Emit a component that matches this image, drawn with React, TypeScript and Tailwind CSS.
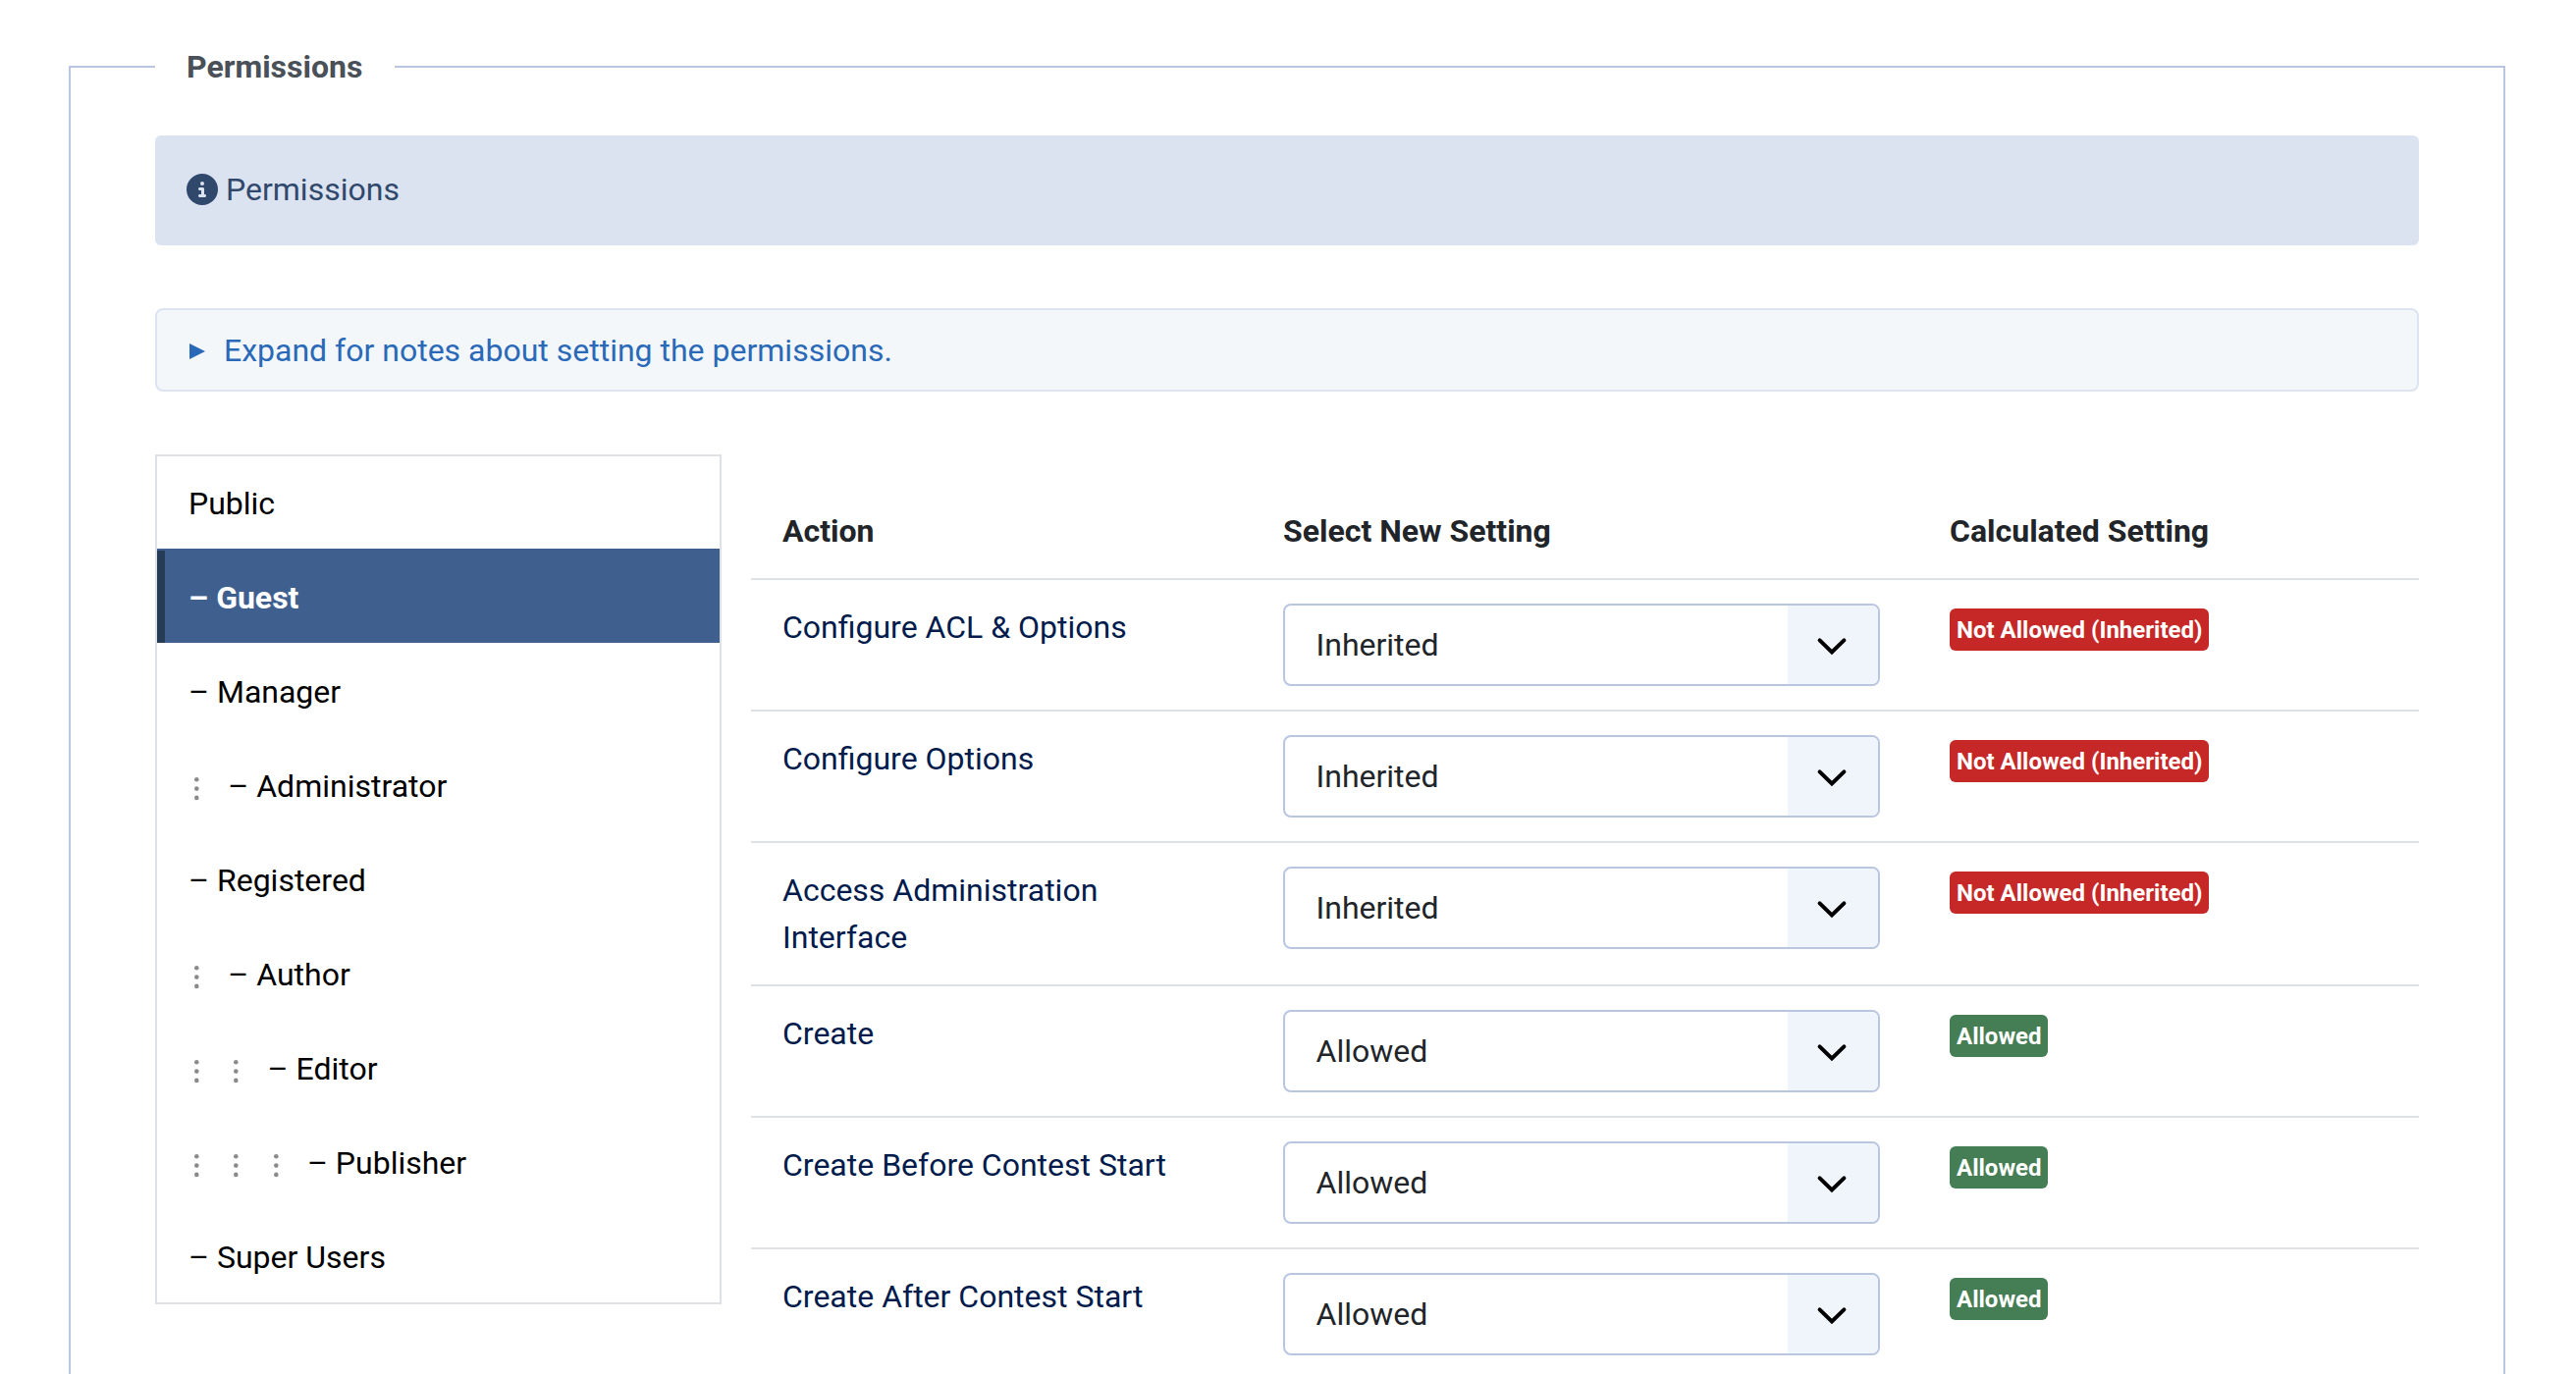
import { FaCircleInfo } from "react-icons/fa6";

type Group = { name: string; level: number };

const groups: Group[] = [
    { name: "Public", level: 0 },
    { name: "Guest", level: 1 },
    { name: "Manager", level: 1 },
    { name: "Administrator", level: 2 },
    { name: "Registered", level: 1 },
    { name: "Author", level: 2 },
    { name: "Editor", level: 3 },
    { name: "Publisher", level: 4 },
    { name: "Super Users", level: 1 },
];

const actions = [
    { label: "Configure ACL & Options", setting: "Inherited", allowed: false },
    { label: "Configure Options", setting: "Inherited", allowed: false },
    {
        label: "Access Administration Interface",
        setting: "Inherited",
        allowed: false,
    },
    { label: "Create", setting: "Allowed", allowed: true },
    { label: "Create Before Contest Start", setting: "Allowed", allowed: true },
    { label: "Create After Contest Start", setting: "Allowed", allowed: true },
];

function GroupTab({ group, active }: { group: Group; active: boolean }) {
    return (
        <button
            type="button"
            className={
                active
                    ? "flex h-24 shrink-0 items-center bg-[#3f608e] pt-1 pl-8 text-left font-bold text-white shadow-[inset_0_2px_0_#3f608e,inset_8px_0_0_#253b56]"
                    : "flex h-24 shrink-0 items-center pt-1 pl-8 text-left text-black"
            }
        >
            {Array.from({ length: Math.max(group.level - 1, 0) }).map(
                (_, i) => (
                    <svg
                        key={i}
                        className="mt-[6px] w-[40.3px] fill-[#8a8a8a]"
                        height="26"
                        viewBox="0 0 40.3 26"
                    >
                        <circle cx="8.3" cy="3.3" r="2.3" />
                        <circle cx="8.3" cy="12.6" r="2.3" />
                        <circle cx="8.3" cy="21.9" r="2.3" />
                    </svg>
                )
            )}
            {group.level > 0 ? `– ${group.name}` : group.name}
        </button>
    );
}

function SettingSelect({ value }: { value: string }) {
    return (
        <div className="flex h-[84px] w-[608px] overflow-hidden rounded-lg border-2 border-[#b8c6e1] bg-white text-[#212529]">
            <span className="flex flex-1 items-center pl-[31.5px]">
                {value}
            </span>
            <span className="flex w-[92px] items-center justify-center bg-[#f0f4fb]">
                <svg
                    className="mt-1 mr-[3px]"
                    width="32"
                    height="20"
                    viewBox="0 0 32 20"
                    fill="none"
                    stroke="#000"
                    strokeWidth="4"
                    strokeLinecap="round"
                    strokeLinejoin="miter"
                >
                    <path d="M3.6 3.4L16 15.4L28.4 3.4" />
                </svg>
            </span>
        </div>
    );
}

function Badge({ allowed }: { allowed: boolean }) {
    return (
        <span
            className={
                allowed
                    ? "mt-[5px] flex h-[43px] w-fit items-center rounded-md bg-[#457d54] px-[7px] text-2xl font-bold text-white"
                    : "mt-[5px] flex h-[43px] w-fit items-center rounded-md bg-[#c52827] px-[7px] text-2xl font-bold text-white"
            }
        >
            {allowed ? "Allowed" : "Not Allowed (Inherited)"}
        </span>
    );
}

export default function App() {
    return (
        <div className="h-[1400px] overflow-hidden bg-white px-[70px] pt-11 font-['Roboto',sans-serif] text-[32px] leading-[48px] text-[#212529]">
            <fieldset className="h-[1500px] w-[2482px] border-2 border-[#b8c6e1] px-[86px] pt-[46px]">
                <legend className="pr-[33px] pl-8 font-bold text-[#495057]">
                    Permissions
                </legend>

                <div className="flex h-28 items-center rounded-md bg-[#dce3f0] px-8 pb-0.5 text-[#30486c]">
                    <FaCircleInfo className="mr-2 size-8" />
                    Permissions
                </div>

                <div className="mt-16 flex h-[85px] items-center rounded-lg border-2 border-[#dce4f1] bg-[#f3f7fa] pl-8 text-[#2a69b8]">
                    <svg
                        className="mt-0.5 mr-[18px] fill-current"
                        width="18"
                        height="16"
                        viewBox="0 0 18 16"
                    >
                        <path d="M1 0L17 8L1 16Z" />
                    </svg>
                    Expand for notes about setting the permissions.
                </div>

                <div className="mt-16 flex items-start gap-[30px]">
                    <nav className="flex w-[577px] shrink-0 flex-col border-2 border-[#dee2e6]">
                        <div className="-mt-0.5 flex flex-col">
                            {groups.map((group) => (
                                <GroupTab
                                    key={group.name}
                                    group={group}
                                    active={group.name === "Guest"}
                                />
                            ))}
                        </div>
                    </nav>

                    <table className="mt-[30px] w-[1699px] table-fixed border-collapse text-left">
                        <thead>
                            <tr className="border-b-2 border-[#dee2e6]">
                                <th className="w-[510px] px-8 py-6">Action</th>
                                <th className="w-[679px] px-8 py-6">
                                    Select New Setting
                                </th>
                                <th className="px-8 py-6">
                                    Calculated Setting
                                </th>
                            </tr>
                        </thead>
                        <tbody>
                            {actions.map((action) => (
                                <tr
                                    key={action.label}
                                    className="border-b-2 border-[#dee2e6] align-top"
                                >
                                    <td className="px-8 py-6 text-[#001b4c]">
                                        {action.label}
                                    </td>
                                    <td className="px-8 py-6">
                                        <SettingSelect value={action.setting} />
                                    </td>
                                    <td className="px-8 py-6">
                                        <Badge allowed={action.allowed} />
                                    </td>
                                </tr>
                            ))}
                        </tbody>
                    </table>
                </div>
            </fieldset>
        </div>
    );
}
